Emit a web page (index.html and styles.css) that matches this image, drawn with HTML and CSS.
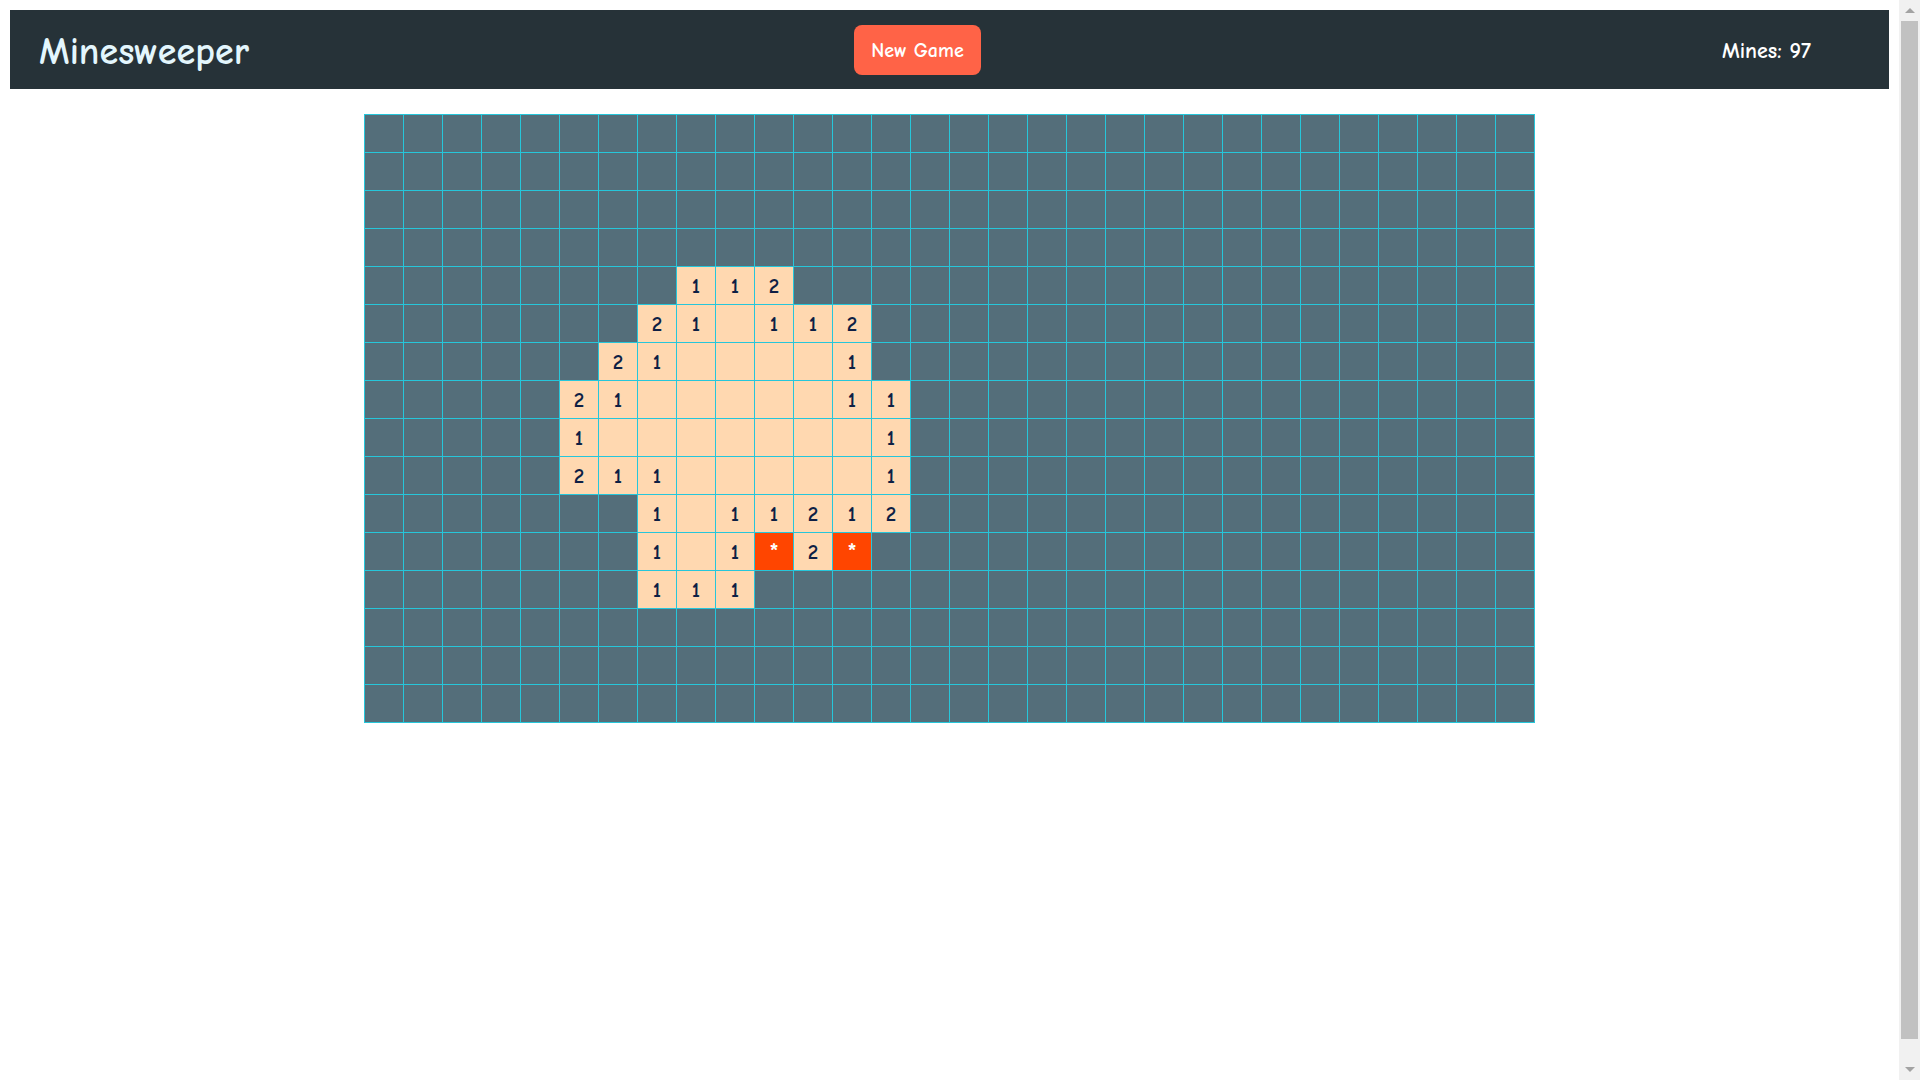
FILE: index.html
```html
<!DOCTYPE html>
<html lang="en">
<head>
<meta charset="utf-8">
<title>Minesweeper</title>
<link rel="stylesheet" href="styles.css">
</head>
<body>
<header class="topbar">
  <h1 class="title">Minesweeper</h1>
  <button class="new-game">New Game</button>
  <div class="mines">Mines: 97</div>
</header>
<main class="board-wrap">
  <div class="board" id="board"></div>
</main>
<div class="fake-scrollbar" aria-hidden="true">
  <div class="sb-arrow sb-up"></div>
  <div class="sb-thumb"></div>
  <div class="sb-arrow sb-down"></div>
</div>
<script src="app.js"></script>
</body>
</html>
```

FILE: styles.css
```css
html, body {
  font-family: "Comic Sans MS", "Comic Neue", "Noto Sans", sans-serif;
}
body {
  margin: 10px 31px 10px 10px;
  background: #ffffff;
}
.topbar {
  display: flex;
  align-items: center;
  height: 79px;
  background: #263238;
  padding: 0 78px 0 29px;
  box-sizing: border-box;
}
.title {
  margin: 0;
  padding-top: 4px;
  width: 815px;
  font-size: 38px;
  font-weight: 700;
  color: #e3f6fd;
}
.new-game {
  width: 127px;
  height: 50px;
  margin-top: 1px;
  border: none;
  border-radius: 8px;
  background: #ff6347;
  color: #ffffff;
  font-family: inherit;
  font-size: 20px;
  font-weight: 700;
  padding: 0;
}
.mines {
  margin-left: auto;
  padding-top: 2px;
  color: #ffffff;
  font-size: 22px;
  font-weight: 700;
}
.board-wrap {
  display: flex;
  justify-content: center;
  margin-top: 25px;
}
.board {
  display: grid;
  grid-template-columns: repeat(30, 38px);
  grid-auto-rows: 37px;
  gap: 1px;
  padding: 1px;
  background: #26c6da;
}
.cell {
  background: #546e7a;
  display: flex;
  align-items: center;
  justify-content: center;
  font-size: 21px;
  font-weight: 700;
  color: #0e1f45;
}
.cell.open {
  background: #ffd8b0;
}
.cell.mine {
  background: #ff4500;
  color: #ffffff;
  font-size: 24px;
  align-items: flex-start;
  padding-top: 4px;
  box-sizing: border-box;
}
.fake-scrollbar {
  position: fixed;
  top: 0;
  right: 0;
  width: 21px;
  height: 100vh;
  background: #f1f1f1;
  display: flex;
  flex-direction: column;
  align-items: center;
}
.sb-arrow {
  height: 21px;
  width: 21px;
  display: flex;
  align-items: center;
  justify-content: center;
  flex: none;
}
.sb-up::before {
  content: "";
  border-left: 5px solid transparent;
  border-right: 5px solid transparent;
  border-bottom: 5px solid #a3a3a3;
}
.sb-down::before {
  content: "";
  border-left: 5px solid transparent;
  border-right: 5px solid transparent;
  border-top: 5px solid #a3a3a3;
}
.sb-thumb {
  flex: 1;
  width: 17px;
  margin-bottom: 20px;
  background: #c1c1c1;
}
```

FILE: app.js
```js
var open = {
  4: {8: "1", 9: "1", 10: "2"},
  5: {7: "2", 8: "1", 9: "", 10: "1", 11: "1", 12: "2"},
  6: {6: "2", 7: "1", 8: "", 9: "", 10: "", 11: "", 12: "1"},
  7: {5: "2", 6: "1", 7: "", 8: "", 9: "", 10: "", 11: "", 12: "1", 13: "1"},
  8: {5: "1", 6: "", 7: "", 8: "", 9: "", 10: "", 11: "", 12: "", 13: "1"},
  9: {5: "2", 6: "1", 7: "1", 8: "", 9: "", 10: "", 11: "", 12: "", 13: "1"},
  10: {7: "1", 8: "", 9: "1", 10: "1", 11: "2", 12: "1", 13: "2"},
  11: {7: "1", 8: "", 9: "1", 10: "*", 11: "2", 12: "*"},
  12: {7: "1", 8: "1", 9: "1"}
};
var board = document.getElementById("board");
for (var r = 0; r < 16; r++) {
  for (var c = 0; c < 30; c++) {
    var d = document.createElement("div");
    d.className = "cell";
    var row = open[r];
    if (row && Object.prototype.hasOwnProperty.call(row, c)) {
      var v = row[c];
      d.className += v === "*" ? " mine" : " open";
      d.textContent = v;
    }
    board.appendChild(d);
  }
}
```
